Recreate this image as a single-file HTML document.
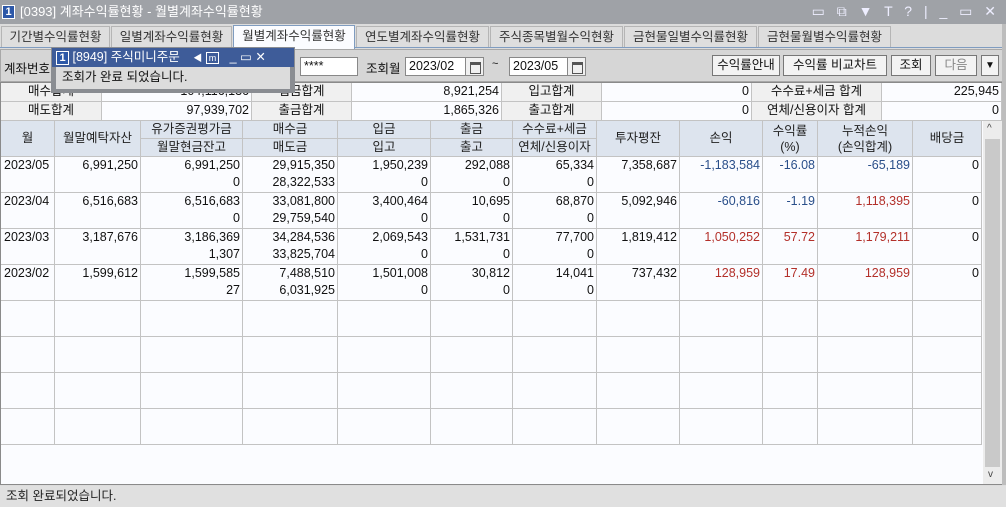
<!DOCTYPE html>
<html><head><meta charset="utf-8"><style>
*{margin:0;padding:0;box-sizing:border-box}
body{width:1006px;height:507px;overflow:hidden;background:#dcdcdc;font-family:"Liberation Sans","Noto Sans CJK KR","NanumGothic",sans-serif;font-size:12px;color:#111;position:relative}
.a{position:absolute;white-space:nowrap}
.title{left:0;top:0;width:1006px;height:24px;background:#9fa2a7;color:#fff;font-size:13px;line-height:24px;padding-left:20px}
.one{display:inline-block;width:13px;height:14px;border:1px solid #fff;background:#2d58a8;color:#fff;font-size:11px;line-height:12px;text-align:center;font-weight:bold}
.tab{top:26px;height:21px;line-height:20px;border:1px solid #b5b5b5;border-bottom:none;background:#dedede;text-align:center;color:#333;font-size:12.5px}
.btn{top:55px;height:21px;border:1px solid #777;background:#f3f3f3;text-align:center;line-height:19px;font-size:12.5px}
.inp{top:57px;height:19px;border:1px solid #888;background:#fff;line-height:17px;padding-left:3px;font-size:12.5px}
.cal{top:57px;height:19px;width:19px;border:1px solid #888;background:#f0f0f0}
.cal:after{content:"";position:absolute;left:4px;top:4px;width:9px;height:8px;border:1px solid #555;border-top:3px solid #555}
.c{position:absolute;border-right:1px solid #c3c3c3;border-bottom:1px solid #c3c3c3;overflow:hidden;white-space:nowrap;line-height:17px;font-size:12.5px}
.r{text-align:right;padding-right:2px}
.ctr{text-align:center}
.lb{background:#f0f0f0}
.h{background:#dde4ee;text-align:center;color:#222}
.d{background:#fbfcff}
.b{color:#2a4f8a}.rd{color:#b3302a}
</style></head><body>
<div class="a title"><span class="one" style="position:absolute;left:2px;top:5px">1</span>[0393] 계좌수익률현황 - 월별계좌수익률현황</div>
<div class="a" style="right:6px;top:3px;color:#eef;font-size:14px;letter-spacing:4px">▭ ⧉ ▼ T ? | _ ▭ ✕</div>
<div class="a" style="left:0;top:24px;width:1006px;height:24px;background:#dcdcdc;border-bottom:1px solid #7f9cc0"></div>
<div class="a tab" style="left:1px;width:109px">기간별수익률현황</div>
<div class="a tab" style="left:111px;width:121px">일별계좌수익률현황</div>
<div class="a tab" style="left:233px;width:122px;background:#fbfcff;top:25px;height:24px;border-color:#7f9cc0">월별계좌수익률현황</div>
<div class="a tab" style="left:356px;width:133px">연도별계좌수익률현황</div>
<div class="a tab" style="left:490px;width:133px">주식종목별월수익현황</div>
<div class="a tab" style="left:624px;width:133px">금현물일별수익률현황</div>
<div class="a tab" style="left:758px;width:133px">금현물월별수익률현황</div>
<div class="a" style="left:0;top:49px;width:1003px;height:33px;background:#d6d6d6;border:1px solid #a8a8a8"></div>
<div class="a" style="left:4px;top:58px;font-size:12.5px">계좌번호</div>
<div class="a inp" style="left:300px;width:58px">****</div>
<div class="a" style="left:366px;top:58px;font-size:12.5px">조회월</div>
<div class="a inp" style="left:405px;width:61px">2023/02</div><div class="a cal" style="left:465px"></div>
<div class="a" style="left:492px;top:58px;font-size:11px">~</div>
<div class="a inp" style="left:509px;width:59px">2023/05</div><div class="a cal" style="left:567px"></div>
<div class="a btn" style="left:712px;width:68px">수익률안내</div>
<div class="a btn" style="left:783px;width:104px">수익률 비교차트</div>
<div class="a btn" style="left:891px;width:40px">조회</div>
<div class="a btn" style="left:935px;width:42px;color:#888">다음</div>
<div class="a btn" style="left:981px;width:18px;font-size:10px">▼</div>
<div class="a" style="left:0;top:82px;width:1003px;height:403px;border:1px solid #8a8a8a;background:#fbfcff"></div>
<div class="c lb ctr" style="left:1px;top:83px;width:101px;height:19px">매수합계</div>
<div class="c r" style="left:102px;top:83px;width:150px;height:19px">104,116,136</div>
<div class="c lb ctr" style="left:252px;top:83px;width:100px;height:19px">입금합계</div>
<div class="c r" style="left:352px;top:83px;width:150px;height:19px">8,921,254</div>
<div class="c lb ctr" style="left:502px;top:83px;width:100px;height:19px">입고합계</div>
<div class="c r" style="left:602px;top:83px;width:150px;height:19px">0</div>
<div class="c lb ctr" style="left:752px;top:83px;width:130px;height:19px">수수료+세금 합계</div>
<div class="c r" style="left:882px;top:83px;width:120px;height:19px">225,945</div>
<div class="c lb ctr" style="left:1px;top:102px;width:101px;height:19px">매도합계</div>
<div class="c r" style="left:102px;top:102px;width:150px;height:19px">97,939,702</div>
<div class="c lb ctr" style="left:252px;top:102px;width:100px;height:19px">출금합계</div>
<div class="c r" style="left:352px;top:102px;width:150px;height:19px">1,865,326</div>
<div class="c lb ctr" style="left:502px;top:102px;width:100px;height:19px">출고합계</div>
<div class="c r" style="left:602px;top:102px;width:150px;height:19px">0</div>
<div class="c lb ctr" style="left:752px;top:102px;width:130px;height:19px">연체/신용이자 합계</div>
<div class="c r" style="left:882px;top:102px;width:120px;height:19px">0</div>
<div class="c h" style="left:1px;top:121px;width:54px;height:36px;line-height:34px">월</div>
<div class="c h" style="left:55px;top:121px;width:86px;height:36px;line-height:34px">월말예탁자산</div>
<div class="c h" style="left:141px;top:121px;width:102px;height:18px">유가증권평가금</div>
<div class="c h" style="left:141px;top:139px;width:102px;height:18px">월말현금잔고</div>
<div class="c h" style="left:243px;top:121px;width:95px;height:18px">매수금</div>
<div class="c h" style="left:243px;top:139px;width:95px;height:18px">매도금</div>
<div class="c h" style="left:338px;top:121px;width:93px;height:18px">입금</div>
<div class="c h" style="left:338px;top:139px;width:93px;height:18px">입고</div>
<div class="c h" style="left:431px;top:121px;width:82px;height:18px">출금</div>
<div class="c h" style="left:431px;top:139px;width:82px;height:18px">출고</div>
<div class="c h" style="left:513px;top:121px;width:84px;height:18px">수수료+세금</div>
<div class="c h" style="left:513px;top:139px;width:84px;height:18px">연체/신용이자</div>
<div class="c h" style="left:597px;top:121px;width:83px;height:36px;line-height:34px">투자평잔</div>
<div class="c h" style="left:680px;top:121px;width:83px;height:36px;line-height:34px">손익</div>
<div class="c h" style="left:763px;top:121px;width:55px;height:36px;line-height:16px;padding-top:2px">수익률<br>(%)</div>
<div class="c h" style="left:818px;top:121px;width:95px;height:36px;line-height:16px;padding-top:2px">누적손익<br>(손익합계)</div>
<div class="c h" style="left:913px;top:121px;width:69px;height:36px;line-height:34px">배당금</div>
<div id="g"></div>
<div class="a" style="left:983px;top:121px;width:19px;height:363px;background:#ececec"></div>
<div class="a" style="left:985px;top:139px;width:15px;height:328px;background:#c9c9c9"></div>
<div class="a" style="left:987px;top:123px;font-size:10px;color:#444">^</div>
<div class="a" style="left:988px;top:469px;font-size:10px;color:#444">v</div>
<div class="a" style="left:1002px;top:24px;width:4px;height:461px;background:#bdbdbd"></div>
<div class="a" style="left:0;top:486px;width:1006px;height:21px;background:#e0e0e0;line-height:21px;padding-left:6px;font-size:12.5px;color:#222">조회 완료되었습니다.</div>
<div class="a" style="left:51px;top:47px;width:244px;height:46px;background:#8a8d92"></div>
<div class="a" style="left:52px;top:48px;width:242px;height:19px;background:#3e5c99;color:#fff;font-size:12.5px;line-height:19px;padding-left:4px"><span class="one" style="background:#2d58a8">1</span> [8949] 주식미니주문 <span style="font-size:9px;margin-left:10px">◀</span> <span style="border:1px solid #fff;font-size:9px;padding:0 2px">m</span>&nbsp; &nbsp;_ ▭ ✕</div>
<div class="a" style="left:56px;top:67px;width:234px;height:22px;background:#dcdcdc;line-height:21px;padding-left:6px;font-size:12.5px">조회가 완료 되었습니다.</div>
<script>
var cols=[[1,54],[55,86],[141,102],[243,95],[338,93],[431,82],[513,84],[597,83],[680,83],[763,55],[818,95],[913,69]];
var rows=[
[["2023/05",""],["6,991,250",""],["6,991,250","0"],["29,915,350","28,322,533"],["1,950,239","0"],["292,088","0"],["65,334","0"],["7,358,687",""],["-1,183,584","",1],["-16.08","",1],["-65,189","",1],["0",""]],
[["2023/04",""],["6,516,683",""],["6,516,683","0"],["33,081,800","29,759,540"],["3,400,464","0"],["10,695","0"],["68,870","0"],["5,092,946",""],["-60,816","",1],["-1.19","",1],["1,118,395","",2],["0",""]],
[["2023/03",""],["3,187,676",""],["3,186,369","1,307"],["34,284,536","33,825,704"],["2,069,543","0"],["1,531,731","0"],["77,700","0"],["1,819,412",""],["1,050,252","",2],["57.72","",2],["1,179,211","",2],["0",""]],
[["2023/02",""],["1,599,612",""],["1,599,585","27"],["7,488,510","6,031,925"],["1,501,008","0"],["30,812","0"],["14,041","0"],["737,432",""],["128,959","",2],["17.49","",2],["128,959","",2],["0",""]]];
var h="";
for(var i=0;i<8;i++){var t=157+i*36;for(var j=0;j<12;j++){var c=cols[j],v=rows[i]?rows[i][j]:["",""];
var cl=v[2]==1?" b":v[2]==2?" rd":"";var al=j==0?"padding-left:3px;":"";
h+='<div class="c d'+(j==0?'':' r')+cl+'" style="'+al+'left:'+c[0]+'px;top:'+t+'px;width:'+c[1]+'px;height:36px">'+v[0]+'<br>'+v[1]+'</div>';}}
document.getElementById("g").innerHTML=h;
</script>
</body></html>
